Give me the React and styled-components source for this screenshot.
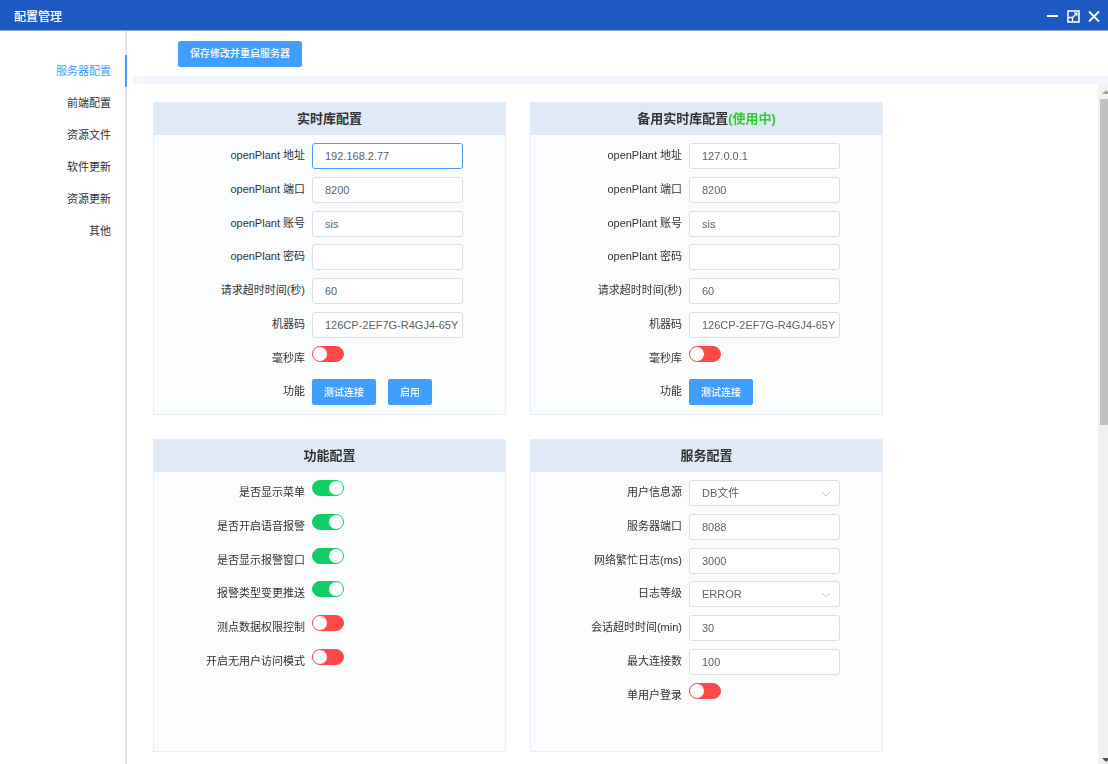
import React, { useState } from 'react';
import styled, { createGlobalStyle } from 'styled-components';

const GlobalStyle = createGlobalStyle`
  * {
    box-sizing: border-box;
  }

  body {
    margin: 0;
    background: #fff;
    color: #333;
    font-size: 11px;
  }

  body, button, input, select {
    font-family: "Liberation Sans", "Noto Sans CJK SC", sans-serif;
  }
`;

const Page = styled.div`
  display: flex;
  flex-direction: column;
  height: 100vh;
`;

const TitleBar = styled.header`
  display: flex;
  align-items: center;
  justify-content: space-between;
  height: 31px;
  padding: 0 8px 0 14px;
  background: #1e58c2;
  border-bottom: 1px solid #8facdf;
  color: #fff;
`;

const PageTitle = styled.h1`
  margin: 0;
  font-size: 12px;
  font-weight: 500;
`;

const WindowButtons = styled.div`
  display: flex;
  gap: 8px;
`;

const IconButton = styled.button`
  display: flex;
  padding: 2px 0 0;
  border: none;
  background: none;
  color: #fff;
  cursor: pointer;
`;

const Body = styled.div`
  display: flex;
  flex: 1;
  min-height: 0;
`;

const Sidebar = styled.nav`
  flex: none;
  width: 127px;
  padding-top: 24px;
  border-right: 2px solid #e4e7ed;
`;

const TabLink = styled.a`
  display: block;
  height: 32px;
  margin-right: -2px;
  padding-right: 14px;
  border-right: 2px solid ${(props) => (props.$active ? '#409eff' : 'transparent')};
  color: ${(props) => (props.$active ? '#409eff' : '#303133')};
  line-height: 32px;
  text-align: right;
  text-decoration: none;
`;

const Main = styled.main`
  display: flex;
  flex: 1;
  flex-direction: column;
  min-width: 0;
  padding-left: 7px;
`;

const Toolbar = styled.div`
  display: flex;
  align-items: center;
  flex: none;
  height: 53px;
  padding-left: 44px;
  border-bottom: 8px solid #f0f7ff;
`;

const Button = styled.button`
  height: 26px;
  padding: 0 11px 2px;
  border: 1px solid #409eff;
  border-radius: 2px;
  background: #409eff;
  color: #fff;
  font-size: 10px;
  font-weight: 500;
  cursor: pointer;
`;

const ScrollArea = styled.div`
  display: flex;
  flex: 1;
  min-height: 0;
`;

const CardGrid = styled.div`
  display: grid;
  flex: 1;
  grid-template-columns: repeat(auto-fill, 353px);
  align-content: start;
  gap: 24px;
  padding: 18px 19px 12px;
  overflow-y: auto;
  scrollbar-width: none;
`;

const Card = styled.section`
  border: 1px solid #e6edf7;
  background: #fbfcfe;
`;

const CardTitle = styled.h2`
  margin: 0;
  background: #e0eaf6;
  font-size: 13px;
  font-weight: bold;
  line-height: 32px;
  text-align: center;
`;

const InUse = styled.span`
  color: #32cd32;
`;

/* Huit lignes par carte, même quand certaines restent vides */
const Form = styled.form`
  display: grid;
  grid-template-rows: repeat(8, 1fr);
  height: 279px;
  padding: 8px 0 1px;
`;

const FormRow = styled.div`
  display: flex;
  align-items: flex-start;
  gap: 7px;
`;

const Label = styled.label`
  flex: none;
  width: 151px;
  line-height: 24px;
  text-align: right;
`;

const Input = styled.input`
  width: 151px;
  height: 26px;
  padding: 0 4px 0 12px;
  border: 1px solid #dcdfe6;
  border-radius: 3px;
  outline: none;
  background: #fff;
  color: #606266;
  font-size: 11px;

  &:focus {
    border-color: #409eff;
  }
`;

const SelectBox = styled.div`
  position: relative;
`;

const Select = styled(Input).attrs({ as: 'select' })`
  display: block;
  appearance: none;
`;

const SelectArrow = styled.svg`
  position: absolute;
  top: 11px;
  right: 9px;
  pointer-events: none;
`;

const Switch = styled.input`
  width: 32px;
  height: 16px;
  margin: 0;
  padding: 0;
  border: 1px solid #ff4949;
  border-radius: 8px;
  background: #ff4949;
  appearance: none;
  cursor: pointer;

  &::before {
    content: '';
    display: block;
    width: 14px;
    height: 14px;
    border-radius: 50%;
    background: #fff;
  }

  &:checked {
    border-color: #13ce66;
    background: #13ce66;
  }

  &:checked::before {
    margin-left: 16px;
  }
`;

const ButtonGroup = styled.div`
  display: flex;
  gap: 12px;
`;

const ScrollTrack = styled.div`
  display: flex;
  flex: none;
  flex-direction: column;
  width: 10px;
  padding-left: 2px;
  background: #f1f1f1;
`;

const ScrollThumb = styled.div`
  flex: none;
  height: 48%;
  margin-bottom: auto;
  background: #c1c1c1;
`;

const tabs = ['服务器配置', '前端配置', '资源文件', '软件更新', '资源更新', '其他'];

const MACHINE_CODE = '126CP-2EF7G-R4GJ4-65Y';

const databaseRows = (address) => [
  { label: 'openPlant 地址', value: address },
  { label: 'openPlant 端口', value: '8200' },
  { label: 'openPlant 账号', value: 'sis' },
  { label: 'openPlant 密码', value: '', type: 'password' },
  { label: '请求超时时间(秒)', value: '60' },
  { label: '机器码', value: MACHINE_CODE },
  { label: '毫秒库', type: 'switch', value: false },
];

const cards = [
  {
    id: 'main',
    title: '实时库配置',
    rows: [
      ...databaseRows('192.168.2.77'),
      { label: '功能', type: 'buttons', value: ['测试连接', '启用'] },
    ],
  },
  {
    id: 'backup',
    title: '备用实时库配置',
    inUse: true,
    rows: [
      ...databaseRows('127.0.0.1'),
      { label: '功能', type: 'buttons', value: ['测试连接'] },
    ],
  },
  {
    id: 'features',
    title: '功能配置',
    rows: [
      { label: '是否显示菜单', type: 'switch', value: true },
      { label: '是否开启语音报警', type: 'switch', value: true },
      { label: '是否显示报警窗口', type: 'switch', value: true },
      { label: '报警类型变更推送', type: 'switch', value: true },
      { label: '测点数据权限控制', type: 'switch', value: false },
      { label: '开启无用户访问模式', type: 'switch', value: false },
    ],
  },
  {
    id: 'service',
    title: '服务配置',
    rows: [
      { label: '用户信息源', type: 'select', value: 'DB文件' },
      { label: '服务器端口', value: '8088' },
      { label: '网络繁忙日志(ms)', value: '3000' },
      { label: '日志等级', type: 'select', value: 'ERROR' },
      { label: '会话超时时间(min)', value: '30' },
      { label: '最大连接数', value: '100' },
      { label: '单用户登录', type: 'switch', value: false },
    ],
  },
];

const Field = ({ id, row, autoFocus }) => {
  const [value, setValue] = useState(row.value);

  if (row.type === 'buttons') {
    return (
      <FormRow>
        <Label as="span">{row.label}</Label>
        <ButtonGroup>
          {row.value.map((text) => (
            <Button key={text} type="button">{text}</Button>
          ))}
        </ButtonGroup>
      </FormRow>
    );
  }

  return (
    <FormRow>
      <Label htmlFor={id}>{row.label}</Label>
      {row.type === 'switch' && (
        <Switch id={id} type="checkbox" checked={value} onChange={(e) => setValue(e.target.checked)} />
      )}
      {row.type === 'select' && (
        <SelectBox>
          <Select id={id} value={value} onChange={(e) => setValue(e.target.value)}>
            <option>{row.value}</option>
          </Select>
          <SelectArrow width="10" height="6" viewBox="0 0 10 6" fill="none" stroke="#c0c4cc">
            <path d="M1 1l4 4 4-4" />
          </SelectArrow>
        </SelectBox>
      )}
      {(!row.type || row.type === 'password') && (
        <Input
          id={id}
          type={row.type || 'text'}
          value={value}
          autoFocus={autoFocus}
          autoComplete="off"
          onChange={(e) => setValue(e.target.value)}
        />
      )}
    </FormRow>
  );
};

const App = () => {
  const [activeTab, setActiveTab] = useState(tabs[0]);

  return (
    <Page>
      <GlobalStyle />
      <TitleBar>
        <PageTitle>配置管理</PageTitle>
        <WindowButtons>
          <IconButton aria-label="最小化">
            <svg width="13" height="13" viewBox="0 0 13 13">
              <path d="M1 5h11v2H1z" fill="currentColor" />
            </svg>
          </IconButton>
          <IconButton aria-label="最大化">
            <svg width="13" height="13" viewBox="0 0 13 13" fill="none" stroke="currentColor">
              <rect x="1" y="1" width="11" height="11" strokeWidth="1.6" />
              <path d="M2 7.5h3.5V11M5.5 7.5l4-4" strokeWidth="1.3" />
              <path d="M6.5 2.5h4v4z" fill="currentColor" stroke="none" />
            </svg>
          </IconButton>
          <IconButton aria-label="关闭">
            <svg width="12" height="13" viewBox="0 0 12 13" fill="none" stroke="currentColor" strokeWidth="1.8">
              <path d="M1 1.5l10 10M11 1.5l-10 10" />
            </svg>
          </IconButton>
        </WindowButtons>
      </TitleBar>

      <Body>
        <Sidebar>
          {tabs.map((tab) => (
            <TabLink key={tab} href="#" $active={tab === activeTab} onClick={() => setActiveTab(tab)}>
              {tab}
            </TabLink>
          ))}
        </Sidebar>

        <Main>
          <Toolbar>
            <Button type="button">保存修改并重启服务器</Button>
          </Toolbar>

          <ScrollArea>
            <CardGrid>
              {cards.map((card) => (
                <Card key={card.id}>
                  <CardTitle>
                    {card.title}
                    {card.inUse && <InUse>(使用中)</InUse>}
                  </CardTitle>
                  <Form>
                    {card.rows.map((row, index) => (
                      <Field
                        key={row.label}
                        id={`${card.id}-${index}`}
                        row={row}
                        autoFocus={card.id === 'main' && index === 0}
                      />
                    ))}
                  </Form>
                </Card>
              ))}
            </CardGrid>

            <ScrollTrack>
              <svg width="8" height="15" viewBox="0 0 8 15">
                <path d="M2 10l4-4 4 4z" fill="#a3a3a3" />
              </svg>
              <ScrollThumb />
              <svg width="8" height="15" viewBox="0 0 8 15">
                <path d="M2 9l4 4 4-4z" fill="#505050" />
              </svg>
            </ScrollTrack>
          </ScrollArea>
        </Main>
      </Body>
    </Page>
  );
};

export default App;
